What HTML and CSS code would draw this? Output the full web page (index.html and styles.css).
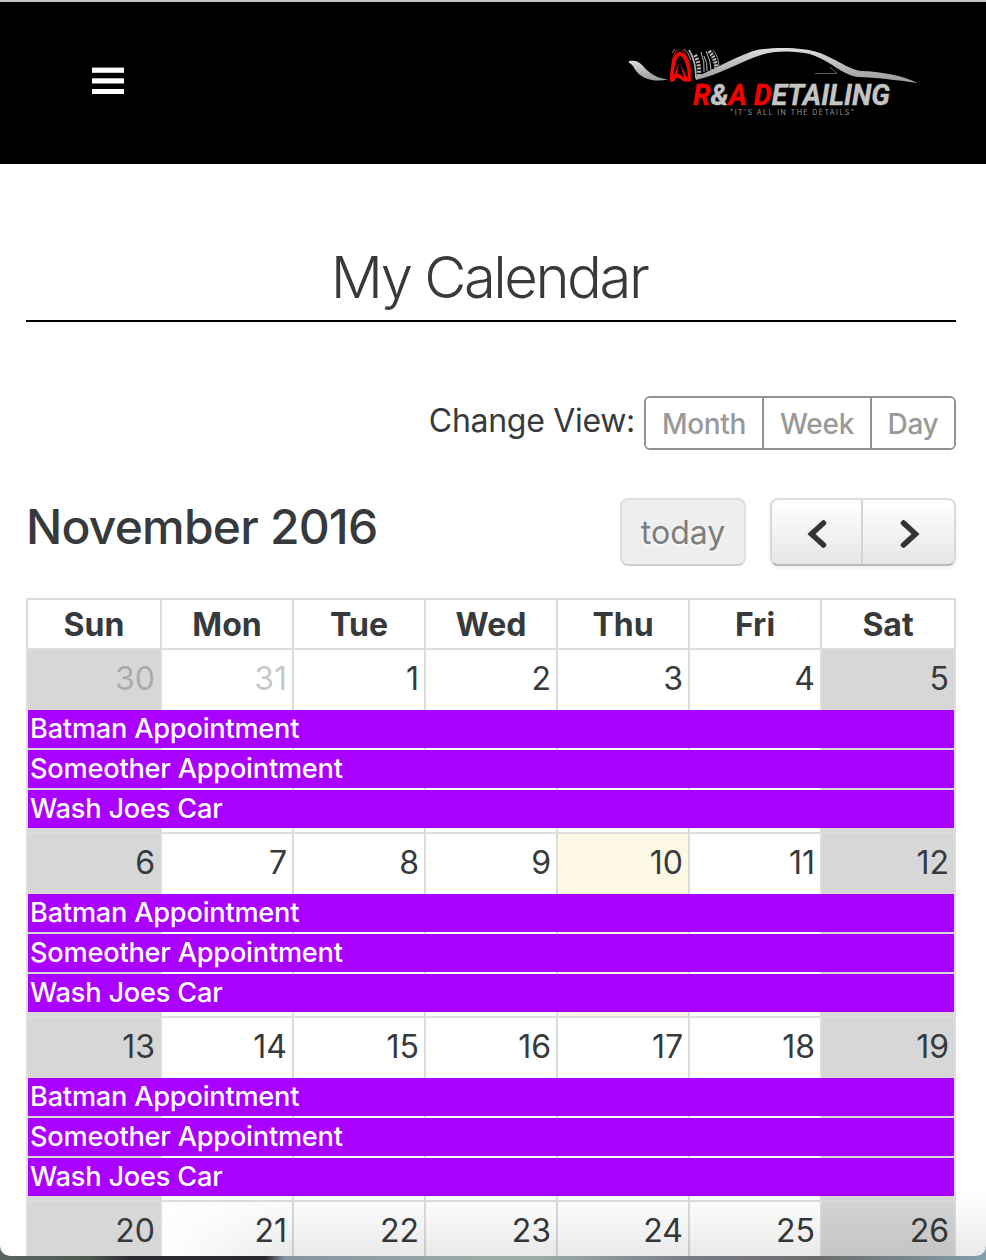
FILE: index.html
```html
<!DOCTYPE html>
<html lang="en">
<head>
<meta charset="utf-8">
<title>My Calendar</title>
<link rel="stylesheet" href="styles.css">
</head>
<body>
<div class="window">
  <header class="navbar">
    <svg class="menu-icon" width="32" height="28" viewBox="0 0 32 28" fill="#fff" role="img" aria-label="Menu">
      <rect y="0.6" width="32" height="5.2"/><rect y="11.3" width="32" height="5.2"/><rect y="22" width="32" height="5"/>
    </svg>
    <svg class="logo" width="310" height="95" viewBox="0 0 310 95" role="img" aria-label="R&amp;A Detailing">
      <defs>
        <linearGradient id="silver" x1="0" x2="0" y1="0" y2="1"><stop offset="0" stop-color="#ddd"/><stop offset="1" stop-color="#999"/></linearGradient>
      </defs>
      <path fill="url(#silver)" d="M9 26 C15 25 19 26 23 31 C29 38 36 43 48 44.500 C34 47.500 23 44 17 37 C14 34 13 29 9 28Z"/>
      <path fill="url(#silver)" d="M75 42 C98 33 120 19 139 14.500 C158 12 184 12 200 18 C220 26 228 34 241 36 C260 36.500 281 40 298 48 C276 45 255 42.500 238 42 C222 40 211 26 190 19 C174 15.500 154 15.500 141 20 C122 26 101 39 76 45Z"/>
      <path fill="#f80606" fill-rule="evenodd" d="M50 46.500 C50 31 53 17 60 17 C67 17 71 31 71 46.500 L64 46.500 L57 42 L54 46.500Z M54 40 C54 31 56 22 60 20.500 C65 23 68 34 68 44 L60 29 L64 42 L57 38 L59 28Z"/>
      <g fill="none" stroke="#e80b0b" stroke-width="1">
        <path d="M52 33 C52 24 54 17 57 15"/><path d="M62 15 Q70 23 71 39"/>
      </g>
      <g fill="none" stroke="#bbb">
        <path stroke-width="0.8" d="M52 18 L55 14 M64 14 Q69 18 71 25"/>
        <path stroke-width="1.6" d="M69 15 Q76 26 76 43"/>
        <path stroke-width="4" stroke-dasharray="2 1.300" d="M75 20 Q80 29 79 41"/>
        <path stroke-width="1" d="M81 17 Q85 27 84 37 M84 21 Q88 29 87 36 M86 16 Q91 26 91 35"/>
        <path stroke-width="4" stroke-dasharray="2 1" d="M89 16 Q96 24 96 33"/>
        <path stroke-width="0.8" d="M93 15 Q99 22 99 32"/>
      </g>
      <path fill="none" stroke="#777" stroke-width="0.8" d="M195 38.500 H217 L210 32"/>
      <text class="logo-name" x="73" y="70" textLength="197" lengthAdjust="spacingAndGlyphs"><tspan class="logo-red">R</tspan>&amp;<tspan class="logo-red">A D</tspan>ETAILING</text>
      <text class="logo-tagline" x="110" y="80" textLength="124">"IT'S ALL IN THE DETAILS"</text>
    </svg>
  </header>
  <main class="content">
    <h1 class="page-title">My Calendar</h1>
    <div class="view-row">
      <span class="view-label">Change View:</span>
      <div class="view-group"><button class="view-btn month">Month</button><button class="view-btn week-view">Week</button><button class="view-btn day-view">Day</button></div>
    </div>
    <div class="toolbar">
      <h2 class="month-title">November 2016</h2>
      <button class="today">today</button>
      <div class="nav-group">
        <button class="nav-btn"><svg width="20" height="28" viewBox="0 0 20 28"><path d="M16.500 3 L4.500 14 L16.500 25"/></svg></button>
        <button class="nav-btn next"><svg width="20" height="28" viewBox="0 0 20 28"><path d="M3.500 3 L15.500 14 L3.500 25"/></svg></button>
      </div>
    </div>
    <section class="calendar">
      <div class="weekdays"><span>Sun</span><span>Mon</span><span>Tue</span><span>Wed</span><span>Thu</span><span>Fri</span><span>Sat</span></div>
      <div class="week">
        <div class="day sun weekend other">30</div><div class="day mon other">31</div><div class="day tue">1</div><div class="day wed">2</div><div class="day thu">3</div><div class="day fri">4</div><div class="day sat weekend">5</div>
        <div class="event first">Batman Appointment</div><div class="event second">Someother Appointment</div><div class="event third">Wash Joes Car</div>
      </div>
      <div class="week">
        <div class="day sun weekend">6</div><div class="day mon">7</div><div class="day tue">8</div><div class="day wed">9</div><div class="day thu current">10</div><div class="day fri">11</div><div class="day sat weekend">12</div>
        <div class="event first">Batman Appointment</div><div class="event second">Someother Appointment</div><div class="event third">Wash Joes Car</div>
      </div>
      <div class="week">
        <div class="day sun weekend">13</div><div class="day mon">14</div><div class="day tue">15</div><div class="day wed">16</div><div class="day thu">17</div><div class="day fri">18</div><div class="day sat weekend">19</div>
        <div class="event first">Batman Appointment</div><div class="event second">Someother Appointment</div><div class="event third">Wash Joes Car</div>
      </div>
      <div class="week">
        <div class="day sun weekend">20</div><div class="day mon">21</div><div class="day tue">22</div><div class="day wed">23</div><div class="day thu">24</div><div class="day fri">25</div><div class="day sat weekend">26</div>
      </div>
    </section>
  </main>
  <div class="bottom-shade"></div>
</div>
</body>
</html>
```
FILE: styles.css
```css
* { box-sizing: border-box; }
html, body { height: 1260px; margin: 0; overflow: hidden; }
body {
  font-family: Inter, "Liberation Sans", sans-serif;
  font-size: 32px;
  color: #373a3c;
  background: linear-gradient(90deg, #59665f 0, #4c5750 90px, #2c2b30 130px, #29282d 265px, #8494a2 285px, #9aaba6 480px, #9aaba6 540px, #777985 700px, #6c6c6a 820px, #839fac 986px);
}
button { font-family: inherit; margin: 0; padding: 0; }
.window {
  position: relative;
  height: 1256px;
  overflow: hidden;
  background: #fff;
  border-top: 2px solid #c3c6c7;
  border-radius: 0 0 10px 10px;
}
.navbar {
  height: 162px;
  padding: 33px 56px 0 92px;
  background: #000;
  display: flex;
  justify-content: space-between;
}
.menu-icon { margin-top: 32px; }
.logo-name { font: italic 700 30px Roboto, sans-serif; fill: #c4c4c4; stroke: #c4c4c4; stroke-width: 0.4px; }
.logo-red { fill: #f80000; stroke: #f80000; }
.logo-tagline { font: 7px Inter, sans-serif; fill: #999; }
.content { padding: 72px 30px 0 26px; }
.page-title {
  margin: 0;
  padding-right: 4px;
  height: 86px;
  border-bottom: 2px solid #000;
  text-align: center;
  font-size: 58px;
  font-weight: 330;
  line-height: 82px;
  letter-spacing: -2.5px;
}
.view-row { display: flex; justify-content: flex-end; margin-top: 74px; height: 54px; }
.view-label { line-height: 50px; margin-right: 9px; white-space: nowrap; letter-spacing: -0.3px; }
.view-group { display: flex; width: 312px; border: 2px solid #919191; border-radius: 6px; overflow: hidden; }
.view-btn { border: 0; background: #fff; color: #999; font-size: 28px; font-weight: 500; line-height: 48px; padding-top: 2px; letter-spacing: -0.3px; }
.view-btn + .view-btn { border-left: 2px solid #919191; }
.month { width: 116px; }
.week-view { width: 108px; }
.day-view { width: 84px; }
.toolbar { display: flex; margin-top: 48px; height: 68px; }
.month-title { margin: 0; flex: 1; font-size: 48px; font-weight: 500; line-height: 58px; letter-spacing: -0.8px; white-space: nowrap; }
.today {
  width: 126px;
  margin-right: 24px;
  border: 2px solid;
  border-color: #dfdfdf #dfdfdf #cfcfcf;
  border-radius: 8px;
  background: #eee;
  color: #7d7d7d;
  font-size: 32px;
  text-shadow: 0 2px 2px rgba(255, 255, 255, 0.75);
}
.nav-group {
  display: flex;
  width: 186px;
  border: 2px solid;
  border-color: #dedede #d9d9d9 #b9b9b9;
  border-radius: 8px;
  background: linear-gradient(#fff, #e6e6e6);
  box-shadow: 0 2px 4px rgba(0, 0, 0, 0.08);
}
.nav-btn { flex: 1; display: flex; align-items: center; justify-content: center; padding-top: 4px; border: 0; background: none; }
.nav-btn + .nav-btn { border-left: 2px solid #d4d4d4; }
.next { padding-left: 2px; }
.nav-btn path { fill: none; stroke: #333; stroke-width: 5.5; stroke-linecap: round; }
.calendar { margin-top: 32px; border: 2px solid #ddd; border-width: 2px 0 0 2px; }
.weekdays, .week { display: grid; grid-template-columns: 134px repeat(5, 132px) 134px; }
.weekdays { height: 48px; }
.weekdays span { border-right: 2px solid #ddd; text-align: center; font-weight: 700; line-height: 50px; }
.week { height: 184px; border-top: 2px solid #ddd; grid-template-rows: 60px 40px 40px 42px; }
.day { grid-row: 1 / -1; padding-right: 5px; border-right: 2px solid #ddd; text-align: right; line-height: 58px; }
.sun { grid-column: 1; }
.mon { grid-column: 2; }
.tue { grid-column: 3; }
.wed { grid-column: 4; }
.thu { grid-column: 5; }
.fri { grid-column: 6; }
.sat { grid-column: 7; }
.weekend { background: #d7d7d7; }
.other { color: rgba(55, 58, 60, 0.3); }
.current { background: #fcf8e3; }
.event {
  grid-column: 1 / -1;
  height: 38px;
  margin-right: 2px;
  padding-left: 2px;
  background: #a0f;
  color: #fff;
  font-size: 27.2px;
  font-weight: 500;
  line-height: 37px;
  letter-spacing: -0.22px;
}
.first { grid-row: 2; }
.second { grid-row: 3; }
.third { grid-row: 4; }
.bottom-shade {
  position: absolute;
  inset: auto 0 0 160px;
  height: 65px;
  background: linear-gradient(transparent, rgba(0, 0, 0, 0.085));
  -webkit-mask-image: linear-gradient(90deg, transparent, #000 130px);
  mask-image: linear-gradient(90deg, transparent, #000 130px);
}
```
